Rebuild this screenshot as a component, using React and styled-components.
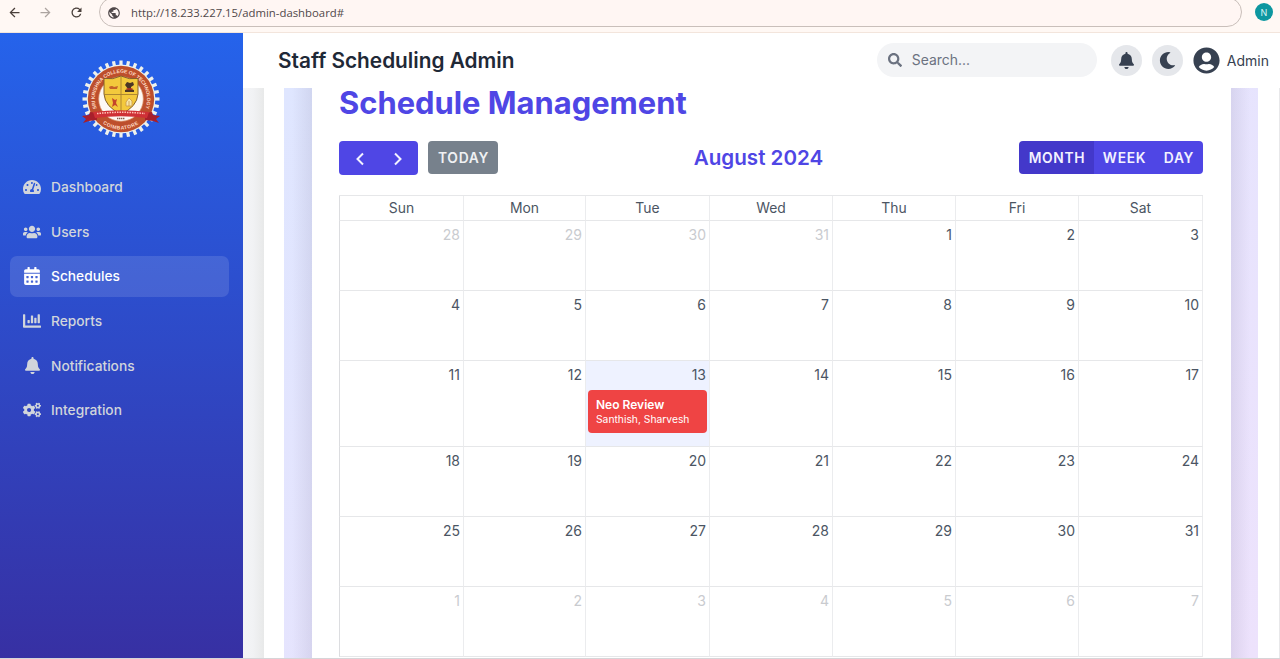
import React from "react";
import styled, { createGlobalStyle } from "styled-components";
import {
  FaTachometerAlt, FaUsers, FaCalendarAlt, FaChartBar, FaBell, FaCogs,
  FaSearch, FaMoon, FaUserCircle,
} from "react-icons/fa";
import { MdArrowBack, MdArrowForward, MdRefresh, MdPublic } from "react-icons/md";

const GlobalStyle = createGlobalStyle`
  * { box-sizing: border-box; }
  body { margin: 0; background: #fff; font-family: Inter, "Liberation Sans", sans-serif; overflow: hidden; }
  button { font-family: inherit; border: 0; padding: 0; cursor: pointer; }
  svg { display: block; flex: none; }
`;

const Page = styled.div`
  height: 659px;
  display: flex;
  flex-direction: column;
  border-bottom: 1px solid #d6d5d8;
`;

const BrowserBar = styled.div`
  height: 33px;
  flex: none;
  display: flex;
  align-items: flex-start;
  background: #fff8f4;
  border-bottom: 1px solid #f3e5dc;
  color: #4a403b;
`;

const BrowserIcon = styled.span`
  width: 31px;
  padding: 5px 0 0 7px;
  opacity: ${(p) => (p.$dim ? 0.45 : 1)};
`;

const AddressField = styled.div`
  width: 1143px;
  height: 30px;
  margin: -3px 0 0 6px;
  padding: 2px 0 0 7px;
  display: flex;
  align-items: center;
  gap: 10px;
  background: #fff6f3;
  border: 1px solid #c9bfba;
  border-radius: 15px;
  font: 11.35px/16px "Open Sans", "Noto Sans", sans-serif;
  color: #50484a;
`;

const ProfileBadge = styled.div`
  width: 18px;
  height: 18px;
  margin: 3px 0 0 13px;
  border-radius: 50%;
  display: grid;
  place-items: center;
  background: #0d97a0;
  color: #d8f4f4;
  font-size: 9px;
`;

const Shell = styled.div`
  flex: 1;
  min-height: 0;
  display: flex;
`;

const Sidebar = styled.aside`
  width: 243px;
  flex: none;
  padding: 25.5px 14px 0 10px;
  background: linear-gradient(180deg, #2563eb, #3730a3);
`;

const LogoWrap = styled.div`
  padding-left: 71px;
  height: 108.3px;
`;

const Nav = styled.nav`
  display: flex;
  flex-direction: column;
  gap: 3.6px;
`;

const NavItem = styled.a`
  height: 41px;
  display: flex;
  align-items: center;
  gap: 10px;
  padding-left: 13px;
  border-radius: 7px;
  font-size: 13.75px;
  font-weight: 500;
  color: ${(p) => (p.$active ? "#fff" : "#d1d5db")};
  background: ${(p) => (p.$active ? "rgba(255,255,255,.12)" : "transparent")};
`;

const NavIcon = styled.span`
  width: 18px;
  display: flex;
  justify-content: center;
`;

const Main = styled.main`
  flex: 1;
  min-width: 0;
  display: flex;
  flex-direction: column;
`;

const Header = styled.header`
  height: 55px;
  flex: none;
  display: flex;
  align-items: center;
  padding: 0 11px 0 35px;
  background: #fff;
`;

const AppTitle = styled.h1`
  margin: 0 auto 0 0;
  font-size: 20.8px;
  font-weight: 600;
  color: #1f2937;
`;

const SearchBox = styled.div`
  width: 220px;
  height: 34px;
  margin: 0 14px 1px 0;
  display: flex;
  align-items: center;
  gap: 10px;
  padding-left: 11px;
  border-radius: 17px;
  background: #f3f4f6;
  color: #6b7280;
  font-size: 13.9px;
`;

const RoundButton = styled.button`
  width: 31px;
  height: 31px;
  margin-right: 10px;
  border-radius: 50%;
  display: grid;
  place-items: center;
  background: #e5e7eb;
  color: #374151;
`;

const Account = styled.div`
  display: flex;
  align-items: center;
  gap: 7px;
  color: #374151;
  font-size: 14px;
`;

const Backdrop = styled.div`
  flex: 1;
  min-height: 0;
  display: flex;
  padding: 0 1px 0 21px;
  background: linear-gradient(90deg, #f3f4f6 0, #f1f2f4 10px, #e8e9e9 21px, #e8e8ea 22px, #e8e8ea 100%);
`;

const Panel = styled.div`
  flex: 1;
  display: flex;
  padding: 0 21px 0 20px;
  background: #fff;
`;

const Tint = styled.section`
  flex: 1;
  display: flex;
  padding: 0 27px 0 28px;
  background:
    linear-gradient(90deg, rgba(60,50,90,0) 8px, rgba(60,50,90,.09) 28px, rgba(60,50,90,.09) calc(100% - 27px), rgba(60,50,90,0) calc(100% - 8px)),
    linear-gradient(145deg, #dfe6ff, #ede2fc);
`;

const Card = styled.div`
  flex: 1;
  padding: 0 28px 0 27px;
  background: #fff;
`;

const PageTitle = styled.h2`
  margin: -5px 0 19px;
  font-size: 30.9px;
  line-height: 39px;
  font-weight: 700;
  color: #4f46e5;
`;

const Toolbar = styled.div`
  height: 34px;
  display: flex;
  justify-content: space-between;
  align-items: flex-start;
  margin-bottom: 20px;
`;

const ToolbarSide = styled.div`
  display: flex;
  gap: 10px;
`;

const ButtonGroup = styled.div`
  display: flex;
  height: ${(p) => p.$h || 34}px;
  border-radius: 4px;
  overflow: hidden;
`;

const ToolButton = styled.button`
  width: ${(p) => p.$w}px;
  height: ${(p) => p.$h || 34}px;
  padding-left: 1px;
  display: grid;
  place-items: center;
  border-radius: ${(p) => (p.$muted ? 4 : 0)}px;
  background: ${(p) => (p.$muted ? "#77818c" : p.$active ? "#4338ca" : "#4f46e5")};
  color: ${(p) => (p.$muted ? "#f0f1f3" : "#f3f2ff")};
  font-size: 13.8px;
  font-weight: 600;
  letter-spacing: .7px;
`;

const MonthTitle = styled.h3`
  margin: 0;
  padding-top: 4px;
  font-size: 20.6px;
  line-height: 25px;
  font-weight: 600;
  color: #4f46e5;
`;

const Calendar = styled.div`
  display: grid;
  grid-template-columns: 125px 122px 124px 123px 123px 123px 124px;
  grid-template-rows: 25px 70px 70px 86px 70px 70px 70px;
  border-top: 1px solid #e6e7e9;
`;

const Cell = styled.div`
  border-right: 1px solid #ebecee;
  border-bottom: 1px solid #e6e7e9;
  border-left: ${(p) => (p.$first ? "1px solid #dcdde0" : "0")};
  background: ${(p) => (p.$today ? "#eef2ff" : "#fff")};
`;

const DayName = styled(Cell)`
  text-align: center;
  font-size: 13.9px;
  line-height: 24px;
  color: #4b5563;
`;

const DayNumber = styled.div`
  padding: 5px 3px 0 0;
  text-align: right;
  font-size: 14px;
  line-height: 18px;
  color: ${(p) => (p.$other ? "#c9cbcf" : "#4b5563")};
`;

const EventCard = styled.div`
  height: 43px;
  margin: 6px 2px 0;
  padding: 7px 0 0 8px;
  border-radius: 4px;
  background: #ef4444;
  color: #fff;
  font-size: 10.3px;
  line-height: 15px;
`;

const EventTitle = styled.div`
  font-size: 12px;
  font-weight: 600;
`;

const SealText = styled.text`
  font: 700 ${(p) => p.$size}px "Liberation Sans", sans-serif;
  fill: #ffdcc4;
`;

function Seal() {
  const teeth = Array.from({ length: 32 }, (_, i) => i * 11.25);
  return (
    <svg width="80" height="80" viewBox="-40 -40 80 80">
      <g fill="#eef1ec">
        {teeth.map((a) => (
          <rect key={a} x="-1.6" y="-38.5" width="3.2" height="6" transform={`rotate(${a})`} />
        ))}
        <circle r="34.4" />
      </g>
      <circle r="33.2" fill="#bd4f2c" />
      <circle r="22.3" fill="#fdf8f4" stroke="#dd9a70" strokeWidth=".7" />
      <defs>
        <path id="seal-top" d="M-24.3 9.5A26.1 26.1 0 1 1 24.3 9.5" />
        <path id="seal-bottom" d="M-20.5 22.5A30.4 30.4 0 0 0 20.5 22.5" />
      </defs>
      <SealText $size={5}>
        <textPath href="#seal-top" textLength="101">SRI KRISHNA COLLEGE OF TECHNOLOGY</textPath>
      </SealText>
      <SealText $size={5}>
        <textPath href="#seal-bottom" startOffset="3" textLength="38">COIMBATORE</textPath>
      </SealText>
      <path d="M-17-20.5Q-8-19 0-23Q8-19 17-20.5V-5Q16 8 0 15Q-16 8-17-5Z" fill="#f3c93c" stroke="#84612c" strokeWidth="1" />
      <path d="M0-22.5V14.5M-17-4.5H17" stroke="#a7802f" strokeWidth=".9" />
      <path d="M-12-12q3-2 5 0l4-1-1 3h-7z" fill="#c4622a" />
      <path d="M-9-1l3 2 2-1-1 4 2 4-3-2-3 2 1-4z" fill="#c4452a" />
      <path d="M4-14l2-3 3 1 3-1 1 3-3 2v2l3 1v2H4v-2l3-1z" fill="#4b3526" />
      <path d="M5.5-10h6" stroke="#bd3525" strokeWidth="1.5" />
      <path d="M5 7V3l3-4 3 3v5zM8 2v5" fill="#f7e8a8" stroke="#cc9645" strokeWidth=".8" />
      <path d="M-39 17l7-1 1-3 7 1v7l-8 1-6 2 3-4z" fill="#a81f2b" />
      <path d="M39 17l-7-1-1-3-7 1v7l8 1 6 2-3-4z" fill="#a81f2b" />
      <path d="M-28 13Q0 9.5 28 13L26 19Q0 15.5-26 19Z" fill="#cf3036" />
      <path d="M-24 14.6Q0 12 24 14.6" fill="none" stroke="#ffc3b6" strokeWidth="1.5" strokeDasharray="1.5 1" />
      <path d="M-4 19.5H4" stroke="#875e4d" strokeWidth="1.4" strokeDasharray="1.3 .6" />
    </svg>
  );
}

const NAV = [
  ["Dashboard", FaTachometerAlt, 18],
  ["Users", FaUsers, 18],
  ["Schedules", FaCalendarAlt, 18],
  ["Reports", FaChartBar, 18],
  ["Notifications", FaBell, 17],
  ["Integration", FaCogs, 18],
];

const DAY_NAMES = ["Sun", "Mon", "Tue", "Wed", "Thu", "Fri", "Sat"];
const DAYS = [
  ...[28, 29, 30, 31].map((n) => ({ n, other: true })),
  ...Array.from({ length: 31 }, (_, i) => ({ n: i + 1 })),
  ...[1, 2, 3, 4, 5, 6, 7].map((n) => ({ n, other: true })),
];

function Chevron({ back }) {
  return (
    <svg width="16" height="16" viewBox="0 0 16 16" fill="none" stroke="currentColor" strokeWidth="2">
      <path d={back ? "M11 3.500 5.500 9l5.500 5.500" : "M4 3.500 9.500 9l-5.500 5.500"} />
    </svg>
  );
}

export default function App() {
  return (
    <Page>
      <GlobalStyle />
      <BrowserBar>
        <BrowserIcon><MdArrowBack size={15} /></BrowserIcon>
        <BrowserIcon $dim><MdArrowForward size={15} /></BrowserIcon>
        <BrowserIcon><MdRefresh size={15} /></BrowserIcon>
        <AddressField>
          <MdPublic size={14} />
          <span>http://18.233.227.15/admin-dashboard#</span>
        </AddressField>
        <ProfileBadge>N</ProfileBadge>
      </BrowserBar>
      <Shell>
        <Sidebar>
          <LogoWrap><Seal /></LogoWrap>
          <Nav>
            {NAV.map(([label, Icon, size]) => (
              <NavItem key={label} $active={label === "Schedules"}>
                <NavIcon><Icon size={size} /></NavIcon>
                {label}
              </NavItem>
            ))}
          </Nav>
        </Sidebar>
        <Main>
          <Header>
            <AppTitle>Staff Scheduling Admin</AppTitle>
            <SearchBox><FaSearch size={14} />Search...</SearchBox>
            <RoundButton aria-label="Notifications"><FaBell size={17} /></RoundButton>
            <RoundButton aria-label="Dark mode"><FaMoon size={17} /></RoundButton>
            <Account><FaUserCircle size={27} />Admin</Account>
          </Header>
          <Backdrop>
            <Panel>
              <Tint>
                <Card>
                  <PageTitle>Schedule Management</PageTitle>
                  <Toolbar>
                    <ToolbarSide>
                      <ButtonGroup>
                        <ToolButton $w={40} aria-label="Previous"><Chevron back /></ToolButton>
                        <ToolButton $w={39} aria-label="Next"><Chevron /></ToolButton>
                      </ButtonGroup>
                      <ToolButton $w={70} $h={33} $muted>TODAY</ToolButton>
                    </ToolbarSide>
                    <MonthTitle>August 2024</MonthTitle>
                    <ButtonGroup $h={33}>
                      <ToolButton $w={75} $h={33} $active>MONTH</ToolButton>
                      <ToolButton $w={60} $h={33}>WEEK</ToolButton>
                      <ToolButton $w={49} $h={33}>DAY</ToolButton>
                    </ButtonGroup>
                  </Toolbar>
                  <Calendar>
                    {DAY_NAMES.map((d, i) => <DayName key={d} $first={i === 0}>{d}</DayName>)}
                    {DAYS.map(({ n, other }, i) => {
                      const today = n === 13 && !other;
                      return (
                        <Cell key={i} $first={i % 7 === 0} $today={today}>
                          <DayNumber $other={other}>{n}</DayNumber>
                          {today && (
                            <EventCard>
                              <EventTitle>Neo Review</EventTitle>
                              Santhish, Sharvesh
                            </EventCard>
                          )}
                        </Cell>
                      );
                    })}
                  </Calendar>
                </Card>
              </Tint>
            </Panel>
          </Backdrop>
        </Main>
      </Shell>
    </Page>
  );
}
